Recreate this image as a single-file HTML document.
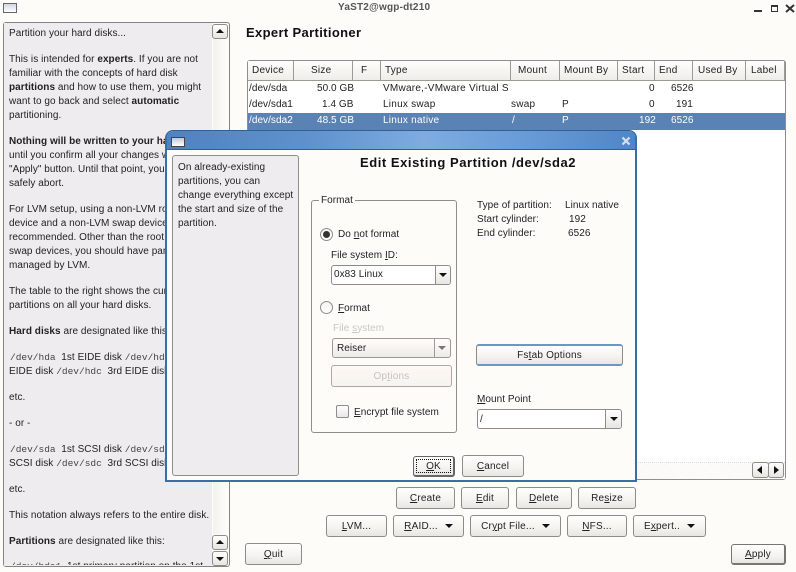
<!DOCTYPE html>
<html><head><meta charset="utf-8"><style>
html,body{margin:0;padding:0;width:796px;height:572px;overflow:hidden;background:#fefcf8}
body{position:relative;font-family:"Liberation Sans",sans-serif;font-size:10px;color:#222}
.a{position:absolute;box-sizing:border-box}
.t{position:absolute;white-space:nowrap;line-height:14px;height:14px;letter-spacing:.05px;margin-top:1px}
.m{font-family:"Liberation Mono",monospace;font-size:9.5px;color:#444;letter-spacing:0}
.btn{position:absolute;box-sizing:border-box;border:1px solid #8d8c88;border-radius:3px;background:linear-gradient(#fffefc,#f6f4f0 55%,#e8e6e1);text-align:center;white-space:nowrap;letter-spacing:.2px;line-height:21px}
.arr{display:inline-block;width:0;height:0;border-left:4px solid transparent;border-right:4px solid transparent;border-top:4px solid #111;vertical-align:1px;margin-left:7px}
.sb{position:absolute;box-sizing:border-box;border:1px solid #8d8c88;border-radius:3px;background:linear-gradient(#fffefc,#e8e6e1)}
.up:after,.dn:after{content:"";position:absolute;left:3px;width:0;height:0;border-left:4px solid transparent;border-right:4px solid transparent}
.up:after{top:4px;border-bottom:4px solid #111}
.dn:after{top:5px;border-top:4px solid #111}
.hd{position:absolute;top:61px;height:20px;box-sizing:border-box;border-right:1px solid #9b9a95;border-bottom:1px solid #9b9a95;background:linear-gradient(#fffefc,#efede8);line-height:20px;white-space:nowrap;letter-spacing:.25px;padding-left:4px}
.rad{position:absolute;box-sizing:border-box;width:13px;height:13px;border:1px solid #8d8c88;border-radius:50%;background:linear-gradient(#f4f3f0,#fff)}
.r{letter-spacing:.25px}
</style></head><body>

<!-- WM titlebar -->
<div class="a" style="left:3px;top:3px;width:14px;height:10px;border:1px solid #666;background:linear-gradient(#cfd5e6,#fff)"></div>
<div class="t" style="left:338px;top:0px;font-weight:bold;color:#555;font-size:10px;letter-spacing:.2px">YaST2@wgp-dt210</div>
<div class="a" style="left:754px;top:10px;width:8px;height:2px;background:#333"></div>
<div class="a" style="left:771px;top:5px;width:7px;height:7px;border:1px solid #333;border-top-width:2px"></div>
<svg class="a" style="left:785px;top:4px" width="10" height="9"><path d="M1 1L9 8M9 1L1 8" stroke="#333" stroke-width="2"/></svg>

<!-- Left help panel -->
<div class="a" style="left:3px;top:22px;width:227px;height:545px;border:1px solid #858480;border-radius:3px;background:#fefcf8"></div>
<div class="a" style="left:4px;top:23px;width:208px;height:543px;background:#eeecef"></div>
<div class="sb up" style="left:212px;top:24px;width:16px;height:15px"></div>
<div class="a" style="left:213px;top:39px;width:15px;height:495px;background:linear-gradient(90deg,#f4f2ee,#fffdf9)"></div>
<div class="sb up" style="left:212px;top:535px;width:16px;height:15px"></div>
<div class="sb dn" style="left:212px;top:551px;width:16px;height:15px"></div>

<div class="t" style="left:9px;top:26px">Partition your hard disks...</div>
<div class="t" style="left:9px;top:52px">This is intended for <b>experts</b>. If you are not</div>
<div class="t" style="left:9px;top:66px">familiar with the concepts of hard disk</div>
<div class="t" style="left:9px;top:80px"><b>partitions</b> and how to use them, you might</div>
<div class="t" style="left:9px;top:94px">want to go back and select <b>automatic</b></div>
<div class="t" style="left:9px;top:108px">partitioning.</div>
<div class="t" style="left:9px;top:134px"><b>Nothing will be written to your hard disk</b></div>
<div class="t" style="left:9px;top:148px">until you confirm all your changes with the</div>
<div class="t" style="left:9px;top:162px">"Apply" button. Until that point, you can</div>
<div class="t" style="left:9px;top:176px">safely abort.</div>
<div class="t" style="left:9px;top:202px">For LVM setup, using a non-LVM root</div>
<div class="t" style="left:9px;top:216px">device and a non-LVM swap device is</div>
<div class="t" style="left:9px;top:230px">recommended. Other than the root and</div>
<div class="t" style="left:9px;top:244px">swap devices, you should have partitions</div>
<div class="t" style="left:9px;top:258px">managed by LVM.</div>
<div class="t" style="left:9px;top:284px">The table to the right shows the current</div>
<div class="t" style="left:9px;top:298px">partitions on all your hard disks.</div>
<div class="t" style="left:9px;top:324px"><b>Hard disks</b> are designated like this</div>
<div class="t" style="left:10px;top:350px"><span class="m">/dev/hda</span> &nbsp;1st EIDE disk <span class="m">/dev/hdb</span></div>
<div class="t" style="left:9px;top:364px">EIDE disk <span class="m">/dev/hdc</span> &nbsp;3rd EIDE disk</div>
<div class="t" style="left:9px;top:390px">etc.</div>
<div class="t" style="left:9px;top:416px">- or -</div>
<div class="t" style="left:10px;top:442px"><span class="m">/dev/sda</span> &nbsp;1st SCSI disk <span class="m">/dev/sdb</span></div>
<div class="t" style="left:9px;top:456px">SCSI disk <span class="m">/dev/sdc</span> &nbsp;3rd SCSI disk</div>
<div class="t" style="left:9px;top:482px">etc.</div>
<div class="t" style="left:9px;top:508px">This notation always refers to the entire disk.</div>
<div class="t" style="left:9px;top:534px"><b>Partitions</b> are designated like this:</div>
<div class="a" style="left:4px;top:560px;width:208px;height:5px;overflow:hidden"><div class="t" style="left:6px;top:-1px"><span class="m">/dev/hda1</span> &nbsp;1st primary partition on the 1st</div></div>

<!-- Right header -->
<div class="t" style="left:246px;top:25px;font-weight:bold;font-size:13px;color:#111;letter-spacing:.35px">Expert Partitioner</div>

<!-- Table -->
<div class="a" style="left:247px;top:60px;width:539px;height:420px;border:1px solid #8f8e8a;border-radius:3px;background:#fff"></div>
<div class="hd" style="left:248px;width:46px">Device</div>
<div class="hd" style="left:294px;width:59px;padding-left:17px">Size</div>
<div class="hd" style="left:353px;width:28px;padding-left:8px">F</div>
<div class="hd" style="left:381px;width:130px">Type</div>
<div class="hd" style="left:511px;width:49px;padding-left:7px">Mount</div>
<div class="hd" style="left:560px;width:58px">Mount By</div>
<div class="hd" style="left:618px;width:37px">Start</div>
<div class="hd" style="left:655px;width:38px">End</div>
<div class="hd" style="left:693px;width:53px;padding-left:5px">Used By</div>
<div class="hd" style="left:746px;width:39px;padding-left:5px">Label</div>

<div class="t" style="left:249px;top:81px">/dev/sda</div>
<div class="t" style="left:317px;top:81px">50.0 GB</div>
<div class="t r" style="left:383px;top:81px">VMware,-VMware Virtual S</div>
<div class="t" style="left:649px;top:81px">0</div>
<div class="t" style="left:671px;top:81px">6526</div>

<div class="t" style="left:249px;top:97px">/dev/sda1</div>
<div class="t" style="left:322px;top:97px">1.4 GB</div>
<div class="t r" style="left:383px;top:97px">Linux swap</div>
<div class="t r" style="left:511px;top:97px">swap</div>
<div class="t" style="left:562px;top:97px">P</div>
<div class="t" style="left:649px;top:97px">0</div>
<div class="t" style="left:676px;top:97px">191</div>

<div class="a" style="left:248px;top:113px;width:537px;height:17px;background:#5a82b5"></div>
<div class="t" style="left:249px;top:113px;color:#fff">/dev/sda2</div>
<div class="t" style="left:317px;top:113px;color:#fff">48.5 GB</div>
<div class="t r" style="left:383px;top:113px;color:#fff">Linux native</div>
<div class="t" style="left:512px;top:113px;color:#fff">/</div>
<div class="t" style="left:562px;top:113px;color:#fff">P</div>
<div class="t" style="left:639px;top:113px;color:#fff">192</div>
<div class="t" style="left:671px;top:113px;color:#fff">6526</div>

<div class="a" style="left:248px;top:462px;width:537px;height:17px;background:repeating-linear-gradient(45deg,#f7f6f3 0 1px,#fff 1px 2px);border-top:1px dotted #ddd"></div>
<div class="sb" style="left:752px;top:462px;width:17px;height:16px"><div class="a" style="left:4px;top:3px;border-top:4px solid transparent;border-bottom:4px solid transparent;border-right:5px solid #111"></div></div>
<div class="sb" style="left:768px;top:462px;width:16px;height:16px"><div class="a" style="left:5px;top:3px;border-top:4px solid transparent;border-bottom:4px solid transparent;border-left:5px solid #111"></div></div>

<!-- Bottom buttons -->
<div class="btn" style="left:396px;top:487px;width:59px;height:22px"><u>C</u>reate</div>
<div class="btn" style="left:461px;top:487px;width:48px;height:22px"><u>E</u>dit</div>
<div class="btn" style="left:516px;top:487px;width:56px;height:22px"><u>D</u>elete</div>
<div class="btn" style="left:578px;top:487px;width:58px;height:22px">Re<u>s</u>ize</div>
<div class="btn" style="left:326px;top:515px;width:61px;height:22px"><u>L</u>VM...</div>
<div class="btn" style="left:393px;top:515px;width:71px;height:22px"><u>R</u>AID...<span class="arr"></span></div>
<div class="btn" style="left:470px;top:515px;width:91px;height:22px">Cr<u>y</u>pt File...<span class="arr"></span></div>
<div class="btn" style="left:567px;top:515px;width:60px;height:22px"><u>N</u>FS...</div>
<div class="btn" style="left:633px;top:515px;width:73px;height:22px">E<u>x</u>pert..<span class="arr"></span></div>
<div class="btn" style="left:245px;top:543px;width:57px;height:22px"><u>Q</u>uit</div>
<div class="btn" style="left:731px;top:544px;width:55px;height:21px;border-color:#77766f;border-width:1px 2px 2px 1px;line-height:19px"><u>A</u>pply</div>

<!-- Dialog -->
<div class="a" style="left:165px;top:130px;width:472px;height:352px;background:#fefcf8;border:2px solid #3b6da6;border-top:1px solid #2f6198;border-radius:8px 8px 0 0"></div>
<div class="a" style="left:167px;top:131px;width:468px;height:19px;border-radius:6px 6px 0 0;background:linear-gradient(90deg,#4f82c0,#5f91cc 30%,#7fabe0 55%,#6a9cd8 75%,#5086c6);border-bottom:1px solid #2f5f96"></div>
<div class="a" style="left:171px;top:137px;width:14px;height:10px;border:1px solid #444;background:linear-gradient(#bfc8dc,#fff)"></div>
<svg class="a" style="left:621px;top:136px" width="10" height="10"><path d="M1.5 1.5L8.5 8.5M8.5 1.5L1.5 8.5" stroke="#d3e0ef" stroke-width="2.2"/></svg>

<!-- dialog help -->
<div class="a" style="left:172px;top:155px;width:127px;height:321px;border:1px solid #8f8e8a;border-radius:3px;background:#eeecef"></div>
<div class="t" style="left:178px;top:160px">On already-existing</div>
<div class="t" style="left:178px;top:174px">partitions, you can</div>
<div class="t" style="left:178px;top:188px">change everything except</div>
<div class="t" style="left:178px;top:202px">the start and size of the</div>
<div class="t" style="left:178px;top:216px">partition.</div>

<div class="t" style="left:360px;top:155px;font-weight:bold;font-size:13px;color:#111;letter-spacing:.55px">Edit Existing Partition /dev/sda2</div>

<!-- Format group -->
<div class="a" style="left:311px;top:200px;width:146px;height:233px;border:1px solid #8f8e8a;border-radius:3px"></div>
<div class="t" style="left:319px;top:193px;background:#fefcf8;padding:0 2px">Format</div>

<div class="rad" style="left:320px;top:228px"><div class="a" style="left:2px;top:2px;width:7px;height:7px;border-radius:50%;background:#333"></div></div>
<div class="t" style="left:338px;top:227px">Do <u>n</u>ot format</div>
<div class="t" style="left:331px;top:248px">File system <u>I</u>D:</div>
<div class="a" style="left:331px;top:265px;width:120px;height:20px;border:1px solid #8d8c88;border-radius:3px;background:#fff"></div>
<div class="a" style="left:435px;top:266px;width:15px;height:18px;border-left:1px solid #8d8c88;border-radius:0 3px 3px 0;background:linear-gradient(#fffefc,#e8e6e1)"><div class="a" style="left:3px;top:7px;border-left:4px solid transparent;border-right:4px solid transparent;border-top:4px solid #111"></div></div>
<div class="t" style="left:334px;top:267px">0x83 Linux</div>

<div class="rad" style="left:320px;top:301px"></div>
<div class="t" style="left:338px;top:301px"><u>F</u>ormat</div>
<div class="t" style="left:333px;top:321px;color:#c8c7c4">File <u>s</u>ystem</div>
<div class="a" style="left:332px;top:338px;width:119px;height:20px;border:1px solid #9b9a95;border-radius:3px;background:linear-gradient(#fffcfa,#eeece8)"></div>
<div class="a" style="left:434px;top:339px;width:1px;height:18px;background:#9b9a95"></div>
<div class="a" style="left:438px;top:346px;border-left:4px solid transparent;border-right:4px solid transparent;border-top:4px solid #777"></div>
<div class="t" style="left:337px;top:341px">Reiser</div>
<div class="btn" style="left:331px;top:365px;width:121px;height:22px;border-color:#aaa9a5;color:#c4c3c0;background:linear-gradient(#fff8f5,#f6f3ef)">Op<u>t</u>ions</div>
<div class="a" style="left:336px;top:405px;width:13px;height:13px;border:1px solid #8d8c88;border-radius:2px;background:linear-gradient(#fff,#e8e6e6)"></div>
<div class="t" style="left:354px;top:405px"><u>E</u>ncrypt file system</div>

<!-- Info -->
<div class="t" style="left:477px;top:198px">Type of partition:</div>
<div class="t" style="left:565px;top:198px">Linux native</div>
<div class="t" style="left:477px;top:212px">Start cylinder:</div>
<div class="t" style="left:569px;top:212px">192</div>
<div class="t" style="left:477px;top:226px">End cylinder:</div>
<div class="t" style="left:568px;top:226px">6526</div>

<div class="btn" style="left:476px;top:344px;width:147px;height:22px;border-color:#6d7f9a #8d8c88;border-top:2px solid #6f95c6;border-bottom:2px solid #6f95c6;line-height:19px">Fs<u>t</u>ab Options</div>
<div class="t" style="left:477px;top:392px"><u>M</u>ount Point</div>
<div class="a" style="left:477px;top:409px;width:145px;height:20px;border:1px solid #8d8c88;border-radius:3px;background:#fff"></div>
<div class="a" style="left:605px;top:410px;width:16px;height:18px;border-left:1px solid #8d8c88;border-radius:0 3px 3px 0;background:linear-gradient(#fffefc,#e8e6e1)"><div class="a" style="left:4px;top:7px;border-left:4px solid transparent;border-right:4px solid transparent;border-top:4px solid #111"></div></div>
<div class="t" style="left:480px;top:412px">/</div>

<div class="btn" style="left:413px;top:456px;width:42px;height:21px;border-color:#666;border-width:1px 2px 2px 1px;line-height:19px"><u>O</u>K<div class="a" style="left:2px;top:2px;width:35px;height:14px;border:1px dotted #111"></div></div>
<div class="btn" style="left:462px;top:455px;width:62px;height:22px"><u>C</u>ancel</div>

</body></html>
